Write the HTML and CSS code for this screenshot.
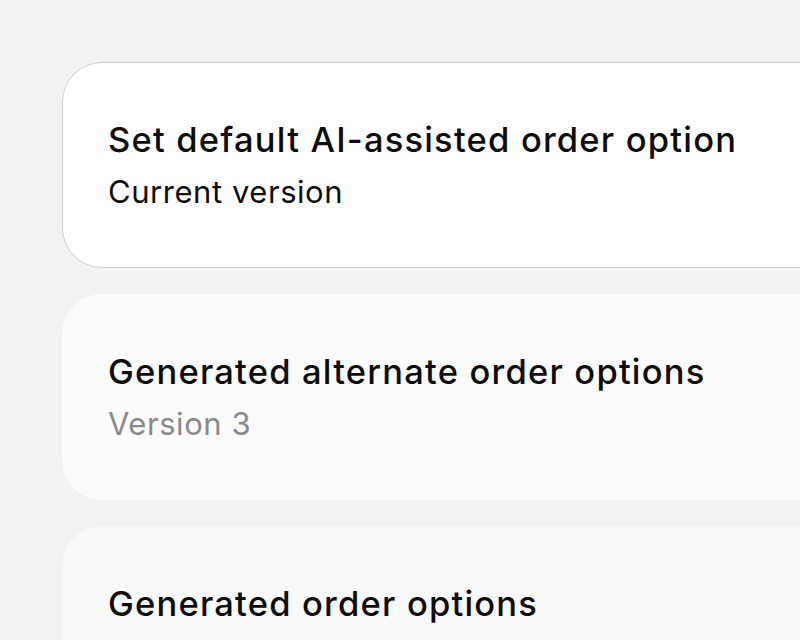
FILE: index.html
```html
<!DOCTYPE html>
<html>
<head>
<meta charset="utf-8">
<link rel="stylesheet" href="styles.css">
</head>
<body>
<div class="list">
  <div class="card card-current">
    <div class="title">Set default AI-assisted order option</div>
    <div class="sub">Current version</div>
  </div>
  <div class="card card-alt">
    <div class="title">Generated alternate order options</div>
    <div class="sub muted">Version 3</div>
  </div>
  <div class="card card-alt card-third">
    <div class="title">Generated order options</div>
    <div class="sub muted">Version 2</div>
  </div>
</div>
</body>
</html>
```
FILE: styles.css
```css
html, body {
  margin: 0;
  padding: 0;
  background: #f2f2f2;
  overflow: hidden;
  height: 640px;
}
body {
  font-family: Inter, "Liberation Sans", sans-serif;
  color: #0d0d0d;
}
.list {
  display: flex;
  flex-direction: column;
  gap: 26px;
  padding: 62px 0 0 62px;
}
.card {
  box-sizing: border-box;
  width: 800px;
  height: 206px;
  border-radius: 40px;
  padding: 55px 45px 0;
  border: 1px solid transparent;
}
.card-current {
  background: #ffffff;
  border-color: #cfcfcf;
}
.card-alt {
  background: #fbfbfb;
}
.card-third {
  background: #f9f9f9;
}
.title {
  font-size: 34.5px;
  font-weight: 500;
  line-height: 44px;
  letter-spacing: 1.2px;
  white-space: nowrap;
}
.sub {
  margin-top: 10px;
  font-size: 31px;
  line-height: 40px;
  letter-spacing: 0.55px;
  color: #0d0d0d;
  white-space: nowrap;
}
.muted {
  color: #8a8a8a;
}
```
